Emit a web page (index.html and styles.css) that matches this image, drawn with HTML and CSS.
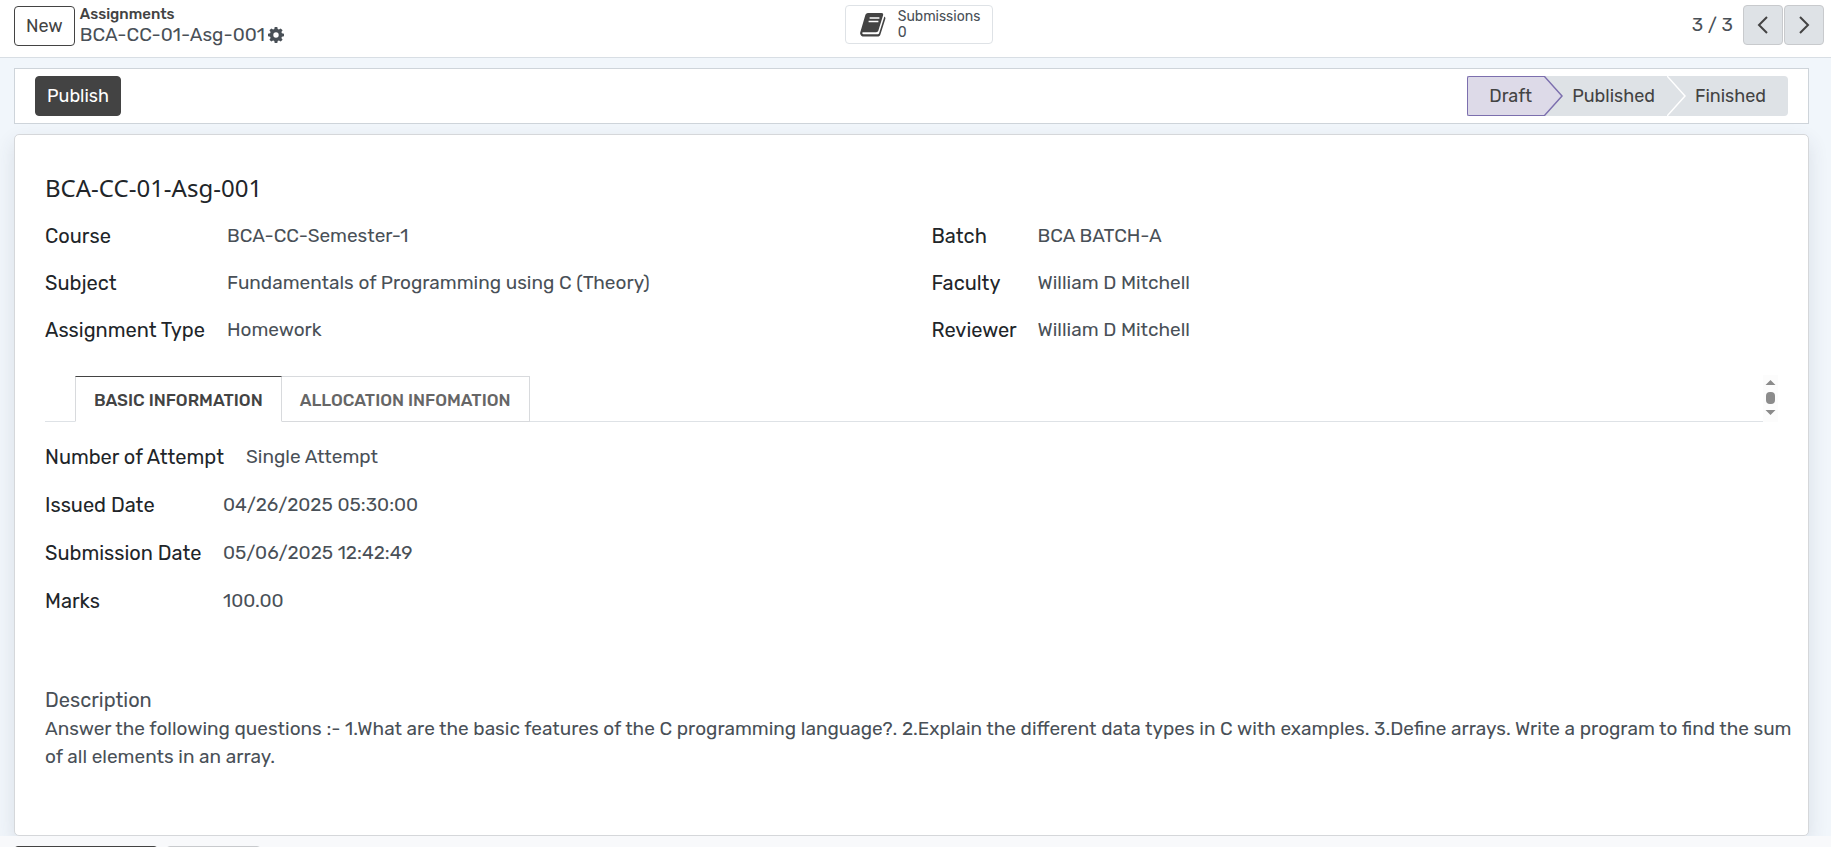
FILE: index.html
```html
<!DOCTYPE html>
<html lang="en">

<head>
    <meta charset="utf-8">
    <title>BCA-CC-01-Asg-001 - Assignments</title>
    <meta name="viewport" content="width=device-width, initial-scale=1">
    <link rel="stylesheet" href="styles.css">
</head>

<body>
    <header class="control-panel">
        <div class="cp-left">
            <button type="button" class="btn btn-outline">New</button>
            <nav class="breadcrumb">
                <a href="#" class="breadcrumb-parent">Assignments</a>
                <div class="breadcrumb-current">
                    <span>BCA-CC-01-Asg-001</span>
                    <button type="button" class="gear" aria-label="Actions">
                        <svg viewBox="0 0 16 16" width="16" height="16">
                            <path fill="currentColor" fill-rule="evenodd" d="M6.7 0h2.6l.4 2.1 1.2.5L12.700 1.400l1.900 1.900-1.200 1.800.5 1.200 2.100.4v2.600l-2.100.4-.5 1.200 1.200 1.800-1.900 1.900-1.800-1.200-1.200.5-.4 2.100H6.700l-.4-2.100-1.200-.5-1.800 1.200-1.900-1.900 1.200-1.800-.5-1.200L0 9.300V6.700l2.100-.4.5-1.200L1.400 3.300l1.900-1.900 1.800 1.200 1.200-.5zM8 5.300a2.700 2.700 0 1 0 0 5.400 2.700 2.700 0 0 0 0-5.400z"/>
                        </svg>
                    </button>
                </div>
            </nav>
        </div>

        <button type="button" class="stat-button">
            <svg viewBox="0 0 26 24" width="26" height="24">
                <path fill="currentColor" d="M8 0h13.500c1.300 0 2 .9 1.600 2.200l-4.700 15.300c-.3 1.100-1.200 1.700-2.300 1.700H3.400c-.8 0-1.200.4-1.100 1 .1.700.8 1 1.800 1h13.600c.7 0 1.200-.4 1.400-1L24 4.700c.2-.5.2-.9.100-1.300 1.100.5 1.600 1.300 1.200 2.500l-4.900 15.500c-.4 1.300-1.500 2.200-2.800 2.200H3.900c-2 0-3.700-1.500-3.800-3.400 0-.7.3-1.200.5-1.900L5.200 2.500C5.600 1 6.600 0 8 0z"/>
                <path stroke="#fff" stroke-width="1.500" d="M9.600 5h9.800M8.600 8.600h9.800"/>
            </svg>
            <span class="stat-info">
                <span>Submissions</span>
                <span>0</span>
            </span>
        </button>

        <div class="pager">
            <span>3 / 3</span>
            <div class="pager-buttons">
                <button type="button" class="pager-btn" aria-label="Previous">
                    <svg viewBox="0 0 12 18" width="12" height="18">
                        <path fill="none" stroke="currentColor" stroke-width="2" d="M10 1 2 9l8 8"/>
                    </svg>
                </button>
                <button type="button" class="pager-btn" aria-label="Next">
                    <svg viewBox="0 0 12 18" width="12" height="18">
                        <path fill="none" stroke="currentColor" stroke-width="2" d="m2 1 8 8-8 8"/>
                    </svg>
                </button>
            </div>
        </div>
    </header>

    <main class="form-view">
        <div class="statusbar">
            <button type="button" class="btn btn-primary">Publish</button>
            <div class="status-steps">
                <button type="button" class="step step-active">
                    <span>Draft</span>
                    <svg class="step-arrow" viewBox="0 0 19 40" width="19" height="40">
                        <path class="arrow-fill" d="M0 0 18 20 0 40z"/>
                        <path class="arrow-line" d="M0 0 18 20 0 40"/>
                    </svg>
                </button>
                <button type="button" class="step">
                    <span>Published</span>
                    <svg class="step-arrow" viewBox="0 0 19 40" width="19" height="40">
                        <path class="arrow-fill" d="M0 0 18 20 0 40z"/>
                        <path class="arrow-line" d="M0 0 18 20 0 40"/>
                    </svg>
                </button>
                <button type="button" class="step">
                    <span>Finished</span>
                </button>
            </div>
        </div>

        <section class="sheet">
            <h1>BCA-CC-01-Asg-001</h1>

            <div class="group-columns">
                <dl class="group">
                    <dt>Course</dt>
                    <dd>BCA-CC-Semester-1</dd>
                    <dt>Subject</dt>
                    <dd>Fundamentals of Programming using C (Theory)</dd>
                    <dt>Assignment Type</dt>
                    <dd>Homework</dd>
                </dl>
                <dl class="group group-right">
                    <dt>Batch</dt>
                    <dd>BCA BATCH-A</dd>
                    <dt>Faculty</dt>
                    <dd>William D Mitchell</dd>
                    <dt>Reviewer</dt>
                    <dd>William D Mitchell</dd>
                </dl>
            </div>

            <div class="notebook">
                <div class="tabs" role="tablist">
                    <button type="button" class="tab tab-active" role="tab" aria-selected="true">Basic Information</button>
                    <button type="button" class="tab" role="tab" aria-selected="false">Allocation Infomation</button>
                </div>
                <div class="tab-scroll">
                    <svg viewBox="0 0 15 47" width="15" height="47">
                        <path d="M2.500 10h10L7.500 5zM2.500 35h10l-5 5z"/>
                        <rect x="3" y="17" width="9" height="12" rx="4"/>
                    </svg>
                </div>
            </div>

            <div class="tab-pane">
                <dl class="group group-single">
                    <dt>Number of Attempt</dt>
                    <dd>Single Attempt</dd>
                </dl>
                <dl class="group group-dates">
                    <dt>Issued Date</dt>
                    <dd>04/26/2025 05:30:00</dd>
                    <dt>Submission Date</dt>
                    <dd>05/06/2025 12:42:49</dd>
                    <dt>Marks</dt>
                    <dd>100.00</dd>
                </dl>
                <div class="description">
                    <h2>Description</h2>
                    <p>Answer the following questions :- 1.What are the basic features of the C programming language?. 2.Explain the different data types in C with examples. 3.Define arrays. Write a program to find the sum of all elements in an array.</p>
                </div>
            </div>
        </section>
    </main>

    <footer class="chatter">
        <button type="button" class="btn btn-primary chatter-send" aria-label="Send message"></button>
        <button type="button" class="btn btn-light chatter-note" aria-label="Log note"></button>
    </footer>
</body>

</html>
```
FILE: styles.css
```css
* {
    box-sizing: border-box;
    margin: 0;
    padding: 0;
}

body {
    font-family: Rubik, Roboto, 'Noto Sans', sans-serif;
    font-size: 19px;
    line-height: 28px;
    color: #495057;
    background: #f8f9fb;
    height: 100vh;
    overflow: hidden;
}

button {
    font: inherit;
    font-size: 18px;
    color: inherit;
    cursor: pointer;
}

svg {
    display: block;
}

.btn {
    height: 40px;
    padding: 0 11px;
    border: 1px solid #434343;
    border-radius: 4px;
}

.btn-outline {
    background: #fff;
    color: #434343;
}

.btn-primary {
    background: #434343;
    color: #fff;
}

.btn-light {
    background: #dee2e6;
    border-color: #c8cacd;
}

/* Control panel */
.control-panel {
    display: grid;
    grid-template-columns: 1fr auto 1fr;
    align-items: start;
    height: 58px;
    padding: 5px 7px 0 14px;
    background: #fff;
    border-bottom: 1px solid #d8dee4;
}

.cp-left {
    display: flex;
    gap: 5px;
    padding-top: 1px;
}

.breadcrumb-parent {
    display: block;
    font-size: 15px;
    font-weight: 500;
    line-height: 17px;
    color: #434343;
    text-decoration: none;
}

.breadcrumb-current {
    display: flex;
    align-items: center;
    gap: 3px;
    line-height: 24px;
}

.gear {
    border: none;
    background: none;
}

.stat-button {
    display: flex;
    align-items: center;
    gap: 12px;
    height: 39px;
    padding: 0 12px 0 14px;
    font-size: 14px;
    line-height: 16px;
    text-align: left;
    background: #fff;
    border: 1px solid #dee2e6;
    border-radius: 4px;
}

.stat-button svg {
    color: #434343;
}

.stat-info {
    display: flex;
    flex-direction: column;
}

.pager {
    display: flex;
    justify-content: flex-end;
    align-items: center;
    gap: 10px;
}

.pager-buttons {
    display: flex;
    gap: 1px;
}

.pager-btn {
    display: flex;
    align-items: center;
    justify-content: center;
    width: 40px;
    height: 40px;
    color: #434343;
    background: #dee2e6;
    border: 1px solid #c8cacd;
    border-radius: 4px;
}

/* Form */
.form-view {
    padding: 10px 22px 0 14px;
    background: #f1f6fb;
    overflow: hidden;
}

.statusbar {
    display: flex;
    justify-content: space-between;
    align-items: center;
    height: 56px;
    padding: 0 20px;
    margin-bottom: 10px;
    background: #fff;
    border: 1px solid #ced4da;
}

.status-steps {
    display: flex;
}

.step {
    position: relative;
    height: 40px;
    padding: 0 12px 0 28px;
    color: #434343;
    background: #dee2e6;
    border: none;
}

.step:last-child {
    padding-right: 22px;
    border-radius: 0 4px 4px 0;
}

.step-active {
    padding-left: 21px;
    background: #dddae8;
    border: 1px solid #7c6fae;
    border-right: none;
    border-radius: 2px 0 0 2px;
}

/* chevron lies over the next step */
.step-arrow {
    position: absolute;
    top: 0;
    left: 100%;
    z-index: 1;
}

.step-active .step-arrow {
    top: -1px;
}

.arrow-fill {
    fill: #dee2e6;
}

.arrow-line {
    fill: none;
    stroke: #fff;
    stroke-width: 1.5;
}

.step-active .arrow-fill {
    fill: #dddae8;
}

.step-active .arrow-line {
    stroke: #7c6fae;
}

.sheet {
    padding: 35px 10px 64px 30px;
    background: #fff;
    border: 1px solid #d5d7da;
    border-radius: 5px;
    box-shadow: 0 8px 20px rgba(50, 60, 80, 0.12);
}

h1 {
    font-family: 'Noto Sans', sans-serif;
    font-size: 24px;
    font-weight: 400;
    line-height: 36px;
    color: #212529;
    margin-bottom: 6px;
}

.group-columns {
    display: grid;
    grid-template-columns: 1fr 1fr;
    gap: 40px;
    margin-right: 20px;
}

.group {
    display: grid;
    grid-template-columns: 182px 1fr;
    grid-auto-rows: 47px;
    align-items: center;
}

.group-right {
    grid-template-columns: 106px 1fr;
}

.group-single {
    grid-template-columns: 201px 1fr;
    grid-auto-rows: 48px;
}

.group-dates {
    grid-template-columns: 178px 1fr;
    grid-auto-rows: 48px;
}

dt {
    font-size: 20px;
    color: #212529;
}

.notebook {
    display: flex;
    margin: 22px 20px 0 0;
}

.tabs {
    display: flex;
    flex: 1;
    align-items: flex-end;
    height: 47px;
    padding-left: 30px;
    border-bottom: 1px solid #dee2e6;
}

.tab {
    height: 46px;
    margin-bottom: -1px;
    padding: 1px 18px 0;
    font-size: 17px;
    font-weight: 500;
    text-transform: uppercase;
    color: #666;
    background: #fff;
    border: 1px solid #d8dadd;
    border-left: none;
}

.tab-active {
    color: #434343;
    border-left: 1px solid #d8dadd;
    border-top-color: #434343;
    border-bottom-color: #fff;
}

.tab-scroll {
    background: #fcfcfc;
    fill: #8b8b8b;
}

.tab-pane {
    padding-top: 11px;
}

.description {
    margin-top: 60px;
}

h2 {
    font-size: 20px;
    font-weight: 400;
    line-height: 30px;
}

.chatter {
    display: flex;
    gap: 8px;
    padding: 10px 14px;
    background: #f8f9fb;
}

.chatter-send {
    width: 144px;
}

.chatter-note {
    width: 95px;
}
```
